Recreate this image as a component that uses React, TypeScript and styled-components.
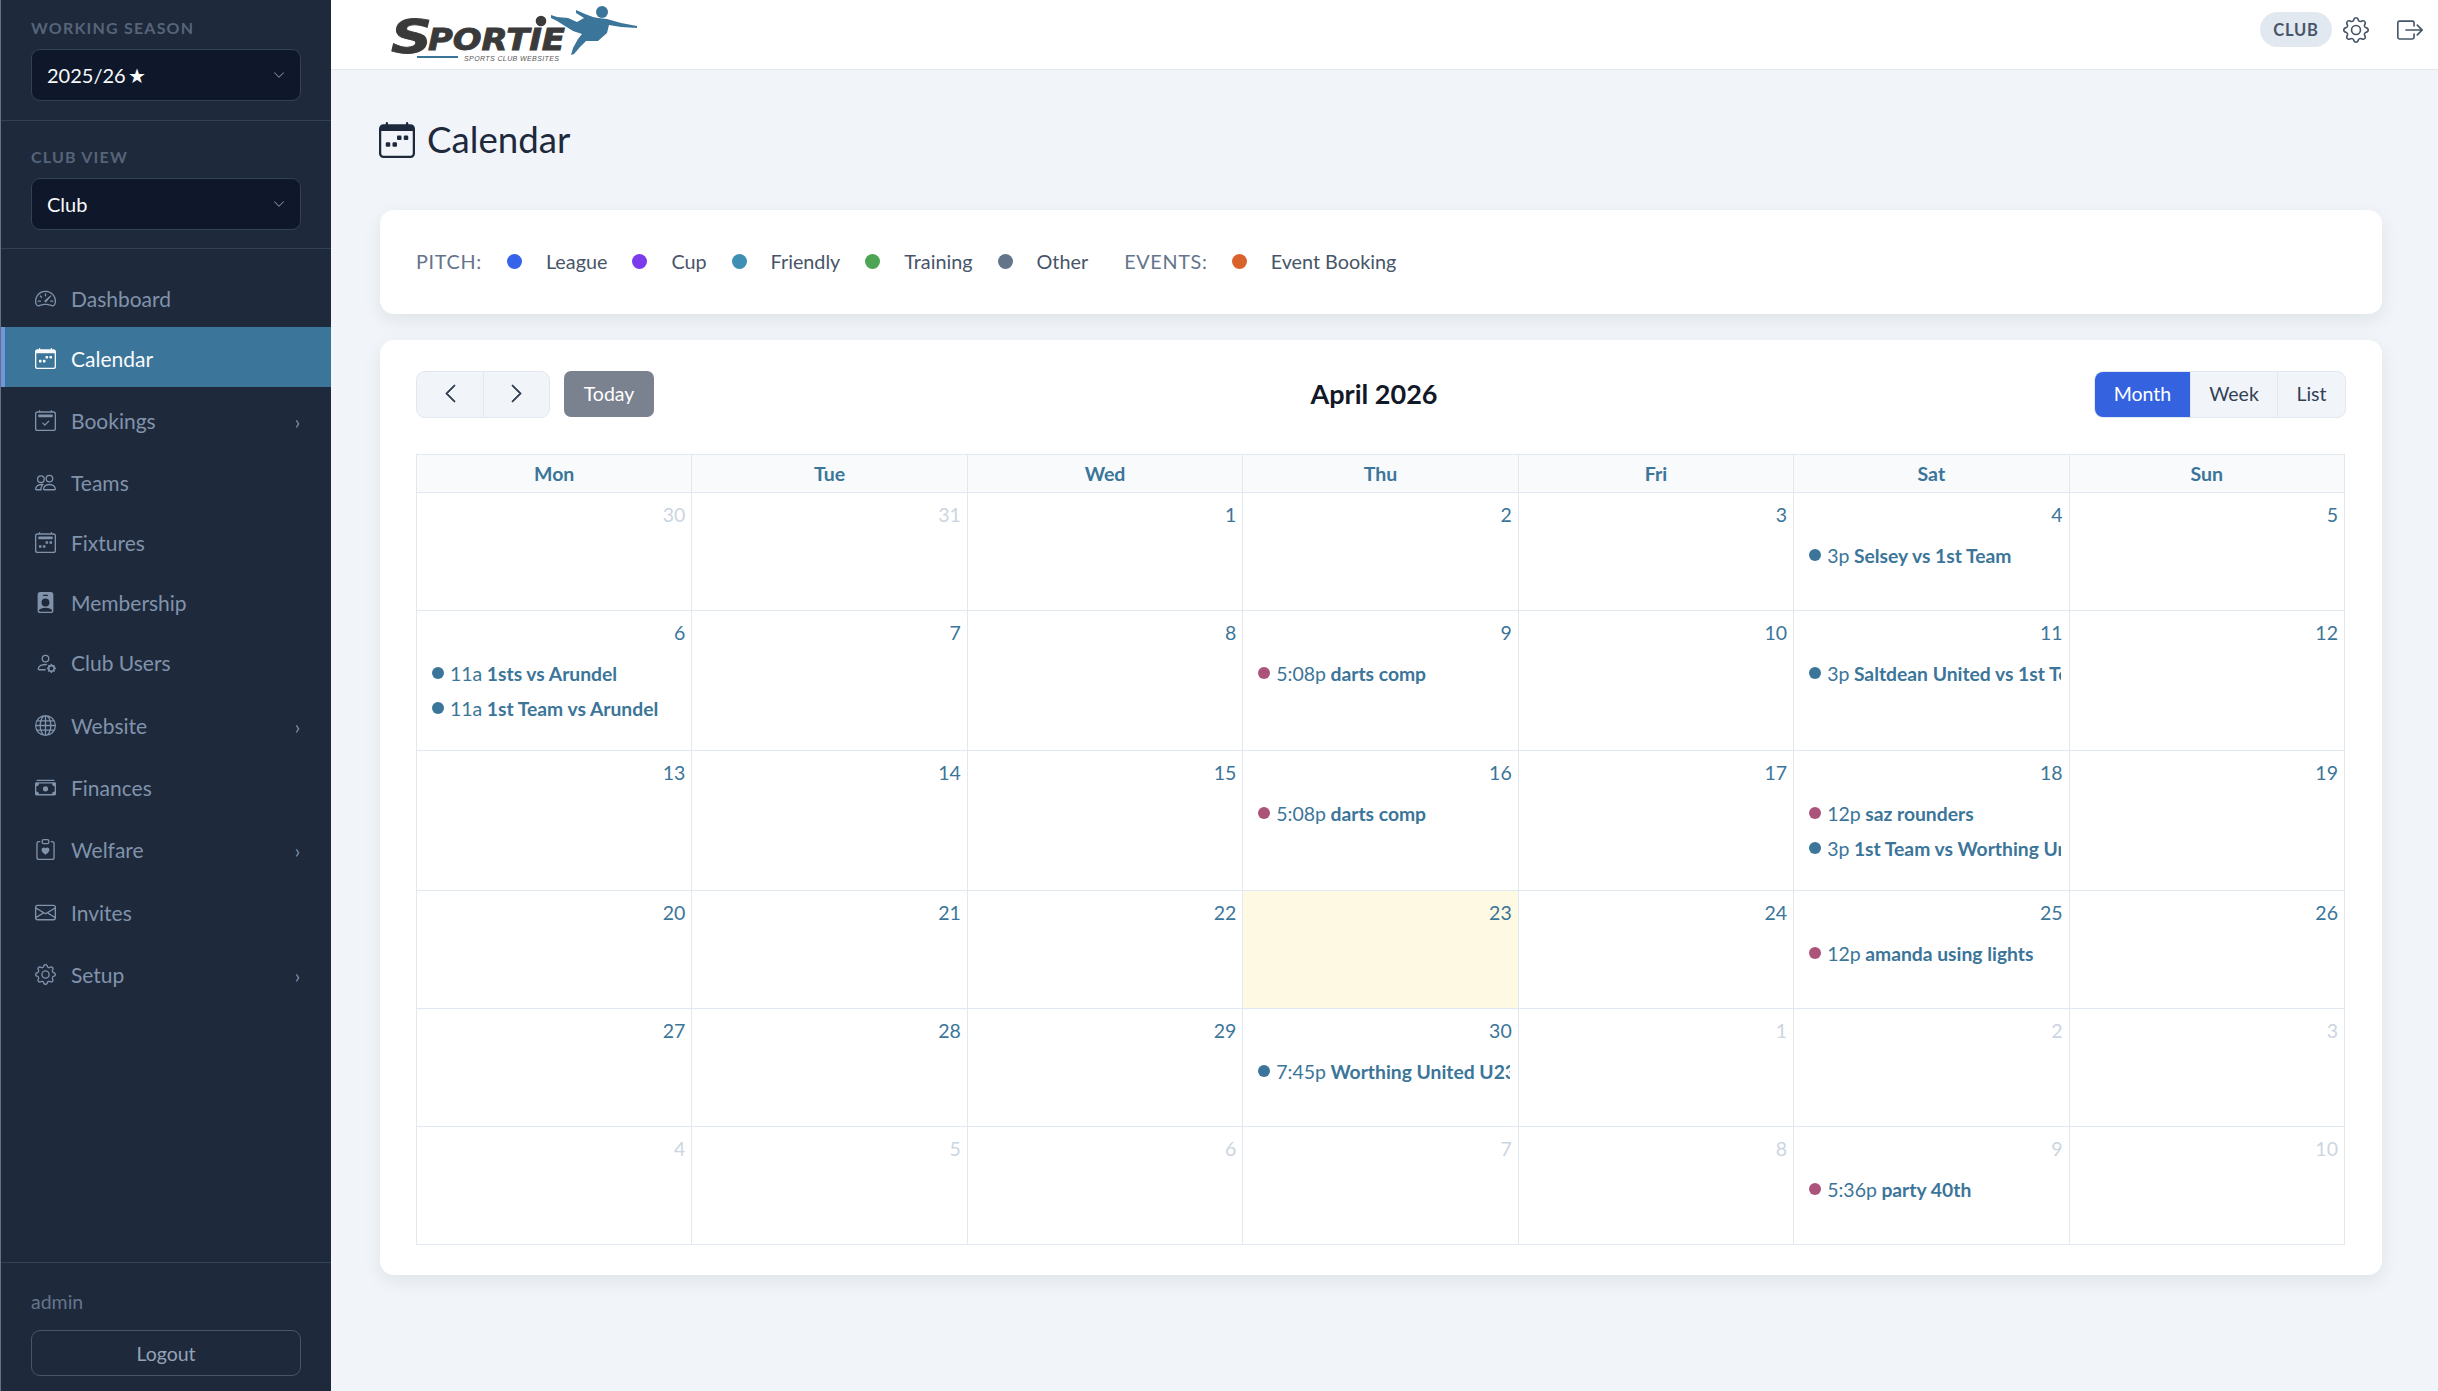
import React from "react";
import styled, { createGlobalStyle } from "styled-components";
import {
  BsSpeedometer2, BsCalendarWeek, BsCalendar2Check, BsPeople, BsCalendar2Week, BsPersonBadgeFill,
  BsPersonGear, BsGlobe, BsCashStack, BsClipboardHeart, BsEnvelope, BsGear, BsBoxArrowRight,
  BsChevronDown, BsChevronLeft, BsChevronRight,
} from "react-icons/bs";

const Global = createGlobalStyle`
  html, body { margin: 0; height: 100%; overflow: hidden; }
  body { font-family: Lato, "Liberation Sans", sans-serif; background: #f1f5f9; }
  #root { height: 100%; }
  * { box-sizing: border-box; }
`;

const Shell = styled.div`display: flex; height: 100%;`;

const Sidebar = styled.aside`
  width: 331px; flex: none; display: flex; flex-direction: column;
  background: #1e293b; border-left: 1px solid #667080;
`;
const Section = styled.div`
  padding: ${p => p.$top}px 30px ${p => p.$bottom}px;
  border-bottom: 1px solid #334155;
`;
const SectionLabel = styled.div`
  font-size: 16px; line-height: 22px; font-weight: 700; letter-spacing: 1.2px;
  color: #566479; text-transform: uppercase; margin-bottom: 10px;
`;
const SelectBox = styled.div`
  height: 52px; display: flex; align-items: center; justify-content: space-between;
  padding: 0 15px; background: #0f172a; border: 1px solid #334155; border-radius: 9px;
  color: #f8fafc; font-size: 20px;
  svg { color: #94a3b8; width: 12px; height: 12px; }
`;
const Nav = styled.nav`padding-top: 18px; display: flex; flex-direction: column;`;
const NavItem = styled.div`
  height: ${p => p.$h}px; display: flex; align-items: center; gap: 15px;
  padding: 2px 31px 0 ${p => (p.$active ? 30 : 34)}px;
  font-size: 21px; color: ${p => (p.$active ? "#f8fafc" : "#8093ab")};
  background: ${p => (p.$active ? "#3b7599" : "transparent")};
  border-left: ${p => (p.$active ? "4px solid #6f97e0" : "none")};
  svg { width: 21px; height: 21px; flex: none; }
`;
const NavText = styled.span`flex: 1;`;
const Caret = styled.span`font-size: 19px; line-height: 1; color: #8093ab; padding-top: 3px;`;
const SideFoot = styled.div`
  margin-top: auto; padding: 26px 30px 15px; border-top: 1px solid #334155;
`;
const AdminName = styled.div`font-size: 19.5px; line-height: 26px; color: #64748b; margin-bottom: 15px;`;
const LogoutBtn = styled.div`
  height: 46px; display: flex; align-items: center; justify-content: center;
  border: 1px solid #475569; border-radius: 9px; color: #94a3b8; font-size: 19.5px;
`;

const Main = styled.main`flex: 1; min-width: 0; display: flex; flex-direction: column;`;
const Topbar = styled.header`
  height: 70px; flex: none; background: #fff; border-bottom: 1px solid #e2e8f0;
  display: flex; align-items: center; justify-content: space-between;
  padding: 0 15px 10px 54px; position: relative;
`;
const LogoSvg = styled.svg`display: block; margin-top: 10px;`;
const TopRight = styled.div`display: flex; align-items: center;`;
const RolePill = styled.span`
  height: 35px; width: 72px; border-radius: 18px; background: #e2e8f0; color: #475569;
  font-size: 16.5px; font-weight: 700; letter-spacing: .8px;
  display: flex; align-items: center; justify-content: center;
`;
const TopIcon = styled.span`
  display: flex; color: #475569; margin-left: ${p => p.$ml}px;
  svg { width: 26px; height: 26px; }
`;

const Content = styled.div`padding: 40px 56px 0 49px;`;
const PageTitle = styled.h1`
  margin: 0 0 40px -1px; height: 58px; padding-bottom: 0; display: flex; align-items: center; gap: 12px;
  font-size: 36.7px; font-weight: 400; color: #1e293b;
  svg { width: 36px; height: 36px; margin-top: 1px; }
  & { margin-bottom: 42px; }
`;
const Card = styled.section`
  background: #fff; border-radius: 14px; box-shadow: 0 6px 18px rgba(15, 23, 42, .08);
`;
const LegendCard = styled(Card)`
  height: 104px; padding: 0 36px 2px; margin-bottom: 26px;
  display: flex; align-items: center; font-size: 19.8px; color: #475569;
`;
const LegendLabel = styled.span`
  color: #64748b; letter-spacing: .7px; margin-right: ${p => p.$mr}px; margin-left: ${p => p.$ml || 0}px;
`;
const LegendItem = styled.span`display: inline-flex; align-items: center; gap: 24px; margin-right: 25px;`;
const LegendDot = styled.i`width: 15px; height: 15px; border-radius: 50%; background: ${p => p.$c};`;

const CalCard = styled(Card)`padding: 30px 36px;`;
const Toolbar = styled.div`display: flex; align-items: center; justify-content: space-between; margin-bottom: 36px; height: 48px;`;
const ToolLeft = styled.div`display: flex; align-items: center; gap: 14px;`;
const BtnGroup = styled.div`
  display: flex; height: 47px; border: 1px solid #e2e8f0; border-radius: 9px; overflow: hidden;
  background: #f1f5f9; font-size: 19.5px; color: #334155; padding-bottom: 0;
`;
const GroupBtn = styled.div`
  width: ${p => p.$w}px; display: flex; align-items: center; justify-content: center; padding-bottom: 2px;
  border-left: ${p => (p.$first ? "none" : "1px solid #e2e8f0")};
  background: ${p => (p.$active ? "#3563e0" : "transparent")};
  color: ${p => (p.$active ? "#fff" : "#334155")};
  svg { width: 21px; height: 21px; stroke: currentColor; stroke-width: .6px; }
`;
const TodayBtn = styled.div`
  width: 90px; height: 46px; border-radius: 7px; background: #7a828f; color: #fff; padding-bottom: 2px;
  display: flex; align-items: center; justify-content: center; font-size: 19.5px;
`;
const MonthTitle = styled.h2`margin: 0 0 2px; font-size: 27px; font-weight: 700; color: #111827;`;

const Grid = styled.div`border-top: 1px solid #e2e8f0; border-left: 1px solid #e2e8f0; margin-right: 1px;`;
const Row = styled.div`display: grid; grid-template-columns: repeat(7, 1fr); height: ${p => p.$h}px;`;
const HeadCell = styled.div`
  background: #f8fafc; border-right: 1px solid #e2e8f0; border-bottom: 1px solid #e2e8f0;
  display: flex; align-items: center; justify-content: center;
  font-size: 19.5px; font-weight: 700; color: #3b7599;
`;
const DayCell = styled.div`
  min-width: 0; border-right: 1px solid #e2e8f0; border-bottom: 1px solid #e2e8f0;
  background: ${p => (p.$today ? "#fef9e3" : "#fff")};
`;
const DayNum = styled.div`
  height: 37px; padding: 7px 6px 0 0; text-align: right; font-size: 19.5px; line-height: 29px;
  color: ${p => (p.$muted ? "#cbd5e1" : "#3b7599")};
`;
const EventList = styled.div`display: flex; flex-direction: column; gap: 7px; margin: 11px 8px 0 15px;`;
const EventRow = styled.div`
  height: 28px; display: flex; align-items: center; gap: 6px; white-space: nowrap; overflow: hidden;
  font-size: 19.5px; color: #3b7599;
`;
const EventDot = styled.i`width: 12px; height: 12px; flex: none; border-radius: 50%; background: ${p => p.$c};`;
const EventTitle = styled.b`font-weight: 700; margin-left: 4.5px; font-size: 19.3px;`;

const navItems = [
  { label: "Dashboard", Icon: BsSpeedometer2, h: 60 },
  { label: "Calendar", Icon: BsCalendarWeek, h: 60, active: true },
  { label: "Bookings", Icon: BsCalendar2Check, h: 64, caret: true },
  { label: "Teams", Icon: BsPeople, h: 60 },
  { label: "Fixtures", Icon: BsCalendar2Week, h: 60 },
  { label: "Membership", Icon: BsPersonBadgeFill, h: 60 },
  { label: "Club Users", Icon: BsPersonGear, h: 61 },
  { label: "Website", Icon: BsGlobe, h: 64, caret: true },
  { label: "Finances", Icon: BsCashStack, h: 60 },
  { label: "Welfare", Icon: BsClipboardHeart, h: 64, caret: true },
  { label: "Invites", Icon: BsEnvelope, h: 62 },
  { label: "Setup", Icon: BsGear, h: 62, caret: true },
];

const legend = [
  ["League", "#3563e9"], ["Cup", "#7c3aed"], ["Friendly", "#3d8fb3"], ["Training", "#4ca454"], ["Other", "#64748b"],
];

const BLUE = "#3b7599";
const PINK = "#ab5378";
type Ev = [string, string, string];
type Day = { n: number; muted?: boolean; today?: boolean; events?: Ev[] };
const d = (n: number, events?: Ev[]): Day => ({ n, events });
const m = (n: number, events?: Ev[]): Day => ({ n, muted: true, events });

const weeks: { h: number; days: Day[] }[] = [
  { h: 118, days: [m(30), m(31), d(1), d(2), d(3), d(4, [["3p", "Selsey vs 1st Team", BLUE]]), d(5)] },
  { h: 140, days: [d(6, [["11a", "1sts vs Arundel", BLUE], ["11a", "1st Team vs Arundel", BLUE]]), d(7), d(8), d(9, [["5:08p", "darts comp", PINK]]), d(10), d(11, [["3p", "Saltdean United vs 1st Team", BLUE]]), d(12)] },
  { h: 140, days: [d(13), d(14), d(15), d(16, [["5:08p", "darts comp", PINK]]), d(17), d(18, [["12p", "saz rounders", PINK], ["3p", "1st Team vs Worthing United", BLUE]]), d(19)] },
  { h: 118, days: [d(20), d(21), d(22), { n: 23, today: true }, d(24), d(25, [["12p", "amanda using lights", PINK]]), d(26)] },
  { h: 118, days: [d(27), d(28), d(29), d(30, [["7:45p", "Worthing United U23", BLUE]]), m(1), m(2), m(3)] },
  { h: 118, days: [m(4), m(5), m(6), m(7), m(8), m(9, [["5:36p", "party 40th", PINK]]), m(10)] },
];

const Logo = () => (
  <LogoSvg width="260" height="64" viewBox="0 0 260 64">
    <g fill="#3a3a3a" stroke="#3a3a3a" strokeWidth="0.9" fontFamily="'DejaVu Sans', sans-serif" fontWeight="700" fontStyle="italic">
      <text x="6" y="50" fontSize="47" textLength="41" lengthAdjust="spacingAndGlyphs">S</text>
      <text x="43" y="47" fontSize="31" textLength="137" lengthAdjust="spacingAndGlyphs">PORTIE</text>
    </g>
    <circle cx="156" cy="18" r="5.3" fill="#3a3a3a" />
    <rect x="32" y="53" width="41" height="2" fill={BLUE} />
    <text x="79" y="58" fontSize="7" fontStyle="italic" fill="#555" fontFamily="'Liberation Sans', sans-serif" textLength="95">SPORTS CLUB WEBSITES</text>
    <circle cx="217" cy="9" r="6" fill={BLUE} />
    <path fill={BLUE} d="M166 12 L172 14 L183 15 L192 19 L199 15 L191 10 L191 7 L200 11 L208 14 L213 15 L222 16 L236 20 L252 23 L252 25 L236 24 L224 22 L222 30 L213 38 L201 38 L195 44 L189 51 L186 52 L188 45 L193 36 L197 31 L188 28 L172 18 L166 15 Z" />
  </LogoSvg>
);

export default function App() {
  return (
    <Shell>
      <Global />
      <Sidebar>
        <Section $top={17} $bottom={19}>
          <SectionLabel>Working Season</SectionLabel>
          <SelectBox>2025/26{"\u2009"}★<BsChevronDown /></SelectBox>
        </Section>
        <Section $top={25} $bottom={18}>
          <SectionLabel>Club View</SectionLabel>
          <SelectBox>Club<BsChevronDown /></SelectBox>
        </Section>
        <Nav>
          {navItems.map(({ label, Icon, h, active, caret }) => (
            <NavItem key={label} $h={h} $active={active}>
              <Icon />
              <NavText>{label}</NavText>
              {caret && <Caret>›</Caret>}
            </NavItem>
          ))}
        </Nav>
        <SideFoot>
          <AdminName>admin</AdminName>
          <LogoutBtn>Logout</LogoutBtn>
        </SideFoot>
      </Sidebar>
      <Main>
        <Topbar>
          <Logo />
          <TopRight>
            <RolePill>CLUB</RolePill>
            <TopIcon $ml={11}><BsGear /></TopIcon>
            <TopIcon $ml={28}><BsBoxArrowRight /></TopIcon>
          </TopRight>
        </Topbar>
        <Content>
          <PageTitle><BsCalendarWeek />Calendar</PageTitle>
          <LegendCard>
            <LegendLabel $mr={25}>PITCH:</LegendLabel>
            {legend.map(([label, c]) => (
              <LegendItem key={label}><LegendDot $c={c} />{label}</LegendItem>
            ))}
            <LegendLabel $mr={24} $ml={11}>EVENTS:</LegendLabel>
            <LegendItem><LegendDot $c="#d9622b" />Event Booking</LegendItem>
          </LegendCard>
          <CalCard>
            <Toolbar>
              <ToolLeft>
                <BtnGroup>
                  <GroupBtn $w={66} $first><BsChevronLeft /></GroupBtn>
                  <GroupBtn $w={66}><BsChevronRight /></GroupBtn>
                </BtnGroup>
                <TodayBtn>Today</TodayBtn>
              </ToolLeft>
              <MonthTitle>April 2026</MonthTitle>
              <BtnGroup>
                <GroupBtn $w={95} $first $active>Month</GroupBtn>
                <GroupBtn $w={87}>Week</GroupBtn>
                <GroupBtn $w={68}>List</GroupBtn>
              </BtnGroup>
            </Toolbar>
            <Grid>
              <Row $h={38}>
                {["Mon", "Tue", "Wed", "Thu", "Fri", "Sat", "Sun"].map(x => <HeadCell key={x}>{x}</HeadCell>)}
              </Row>
              {weeks.map((w, i) => (
                <Row key={i} $h={w.h}>
                  {w.days.map((day, j) => (
                    <DayCell key={j} $today={day.today}>
                      <DayNum $muted={day.muted}>{day.n}</DayNum>
                      {day.events && (
                        <EventList>
                          {day.events.map(([t, title, c]) => (
                            <EventRow key={title}>
                              <EventDot $c={c} />
                              <span>{t}<EventTitle>{title}</EventTitle></span>
                            </EventRow>
                          ))}
                        </EventList>
                      )}
                    </DayCell>
                  ))}
                </Row>
              ))}
            </Grid>
          </CalCard>
        </Content>
      </Main>
    </Shell>
  );
}
